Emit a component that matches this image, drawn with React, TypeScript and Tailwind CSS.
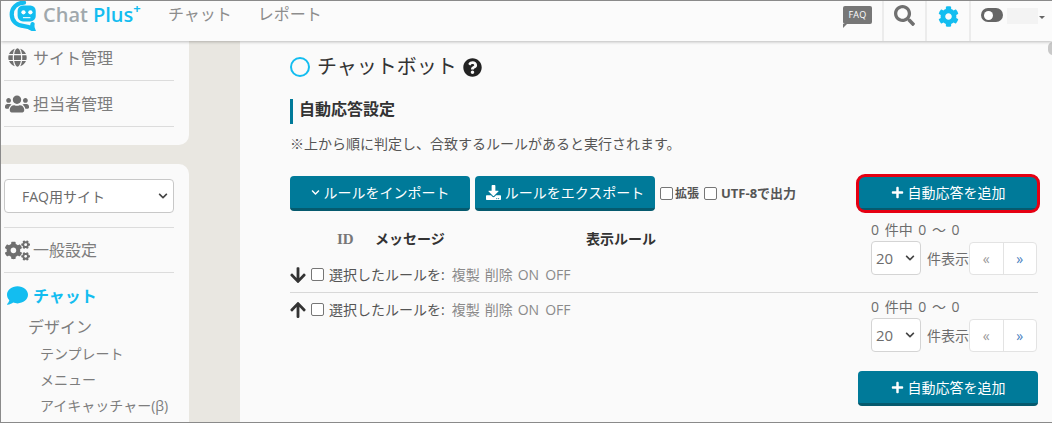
import { FaArrowDown, FaArrowUp, FaChevronDown, FaCog, FaCogs, FaComment, FaDownload, FaGlobe, FaPlus, FaQuestionCircle, FaSearch, FaUsers } from "react-icons/fa"

function Logo() {
  return (
    <svg width="34" height="32" viewBox="0 0 30 30">
      <path d="M15 3.500C8.500 3.500 3.500 8 3.500 14.500S8.500 25 15 25.500c3 .3 6 1.500 8.500 3-.8-2-.8-3.500-.5-5" fill="none" stroke="#13bdf0" strokeWidth="4" strokeLinecap="round" />
      <rect x="9" y="6" width="17" height="15" rx="5" fill="#13bdf0" />
      <circle cx="14.500" cy="12.500" r="2" fill="#fff" />
      <circle cx="21" cy="12.500" r="2" fill="#fff" />
      <path d="M14 17.500h7" stroke="#fff" strokeWidth="1" />
    </svg>
  )
}

function Header() {
  return (
    <header className="flex h-[40px] items-stretch bg-[#fbfbfb] shadow-[0_1px_3px_rgba(0,0,0,0.25)] relative z-10">
      <div className="flex items-center pl-[6px] w-[167px] mt-[-12px]">
        <Logo />
        <span className="ml-[2px] text-[20px] font-semibold text-[#a0a8ac]">Chat</span>
        <span className="ml-[5px] text-[20px] font-semibold text-[#13bdf0]">Plus</span>
        <span className="text-[13px] font-bold text-[#13bdf0] mb-[12px]">+</span>
      </div>
      <nav className="flex items-center gap-[26px] text-[16px] text-[#8d8d8d] mt-[-14px]">
        <span>チャット</span>
        <span>レポート</span>
      </nav>
      <div className="ml-auto flex items-stretch">
        <div className="w-[39px] flex justify-start pt-[5px] relative">
          <div className="w-[29px] h-[18px] bg-[#777] rounded-[2px] text-[9px] text-white text-center leading-[18px] tracking-wide">FAQ</div>
          <div className="absolute left-0 top-[23px] w-0 h-0 border-t-[4px] border-t-[#777] border-r-[4px] border-r-transparent" />
        </div>
        <div className="w-[43px] border-l-2 border-[#ececec] flex justify-center pt-[4px] text-[#707070] text-[21px]">
          <FaSearch />
        </div>
        <div className="w-[44px] border-l-2 border-[#ececec] flex justify-center pt-[5px] text-[#13bdf0] text-[21px]">
          <FaCog />
        </div>
        <div className="w-[83px] border-l-2 border-[#ececec] flex items-start pt-[7px] pl-[10px]">
          <div className="w-[22px] h-[14px] rounded-full bg-[#666] flex items-center pl-[3px]">
            <span className="w-[9px] h-[9px] rounded-full bg-white" />
          </div>
          <div className="ml-[4px] w-[31px] h-[16px] bg-[#f3f3f3]" />
          <div className="ml-[1px] mt-[8px] w-0 h-0 border-x-[3.500px] border-x-transparent border-t-[3.500px] border-t-[#666]" />
        </div>
      </div>
    </header>
  )
}

function SideItem({ icon, label, className }: { icon: React.ReactNode; label: string; className: string }) {
  return (
    <div className={`${className} flex items-center border-b border-[#dcdcdc] text-[#7d7d7d] text-[16px]`}>
      <span className="w-[26px] flex justify-center text-[#6f6f6f]">{icon}</span>
      <span className="ml-[3px]">{label}</span>
    </div>
  )
}

function Sidebar() {
  return (
    <aside className="w-[188px] shrink-0 flex flex-col">
      <div className="bg-[#fafafa] h-[104px] rounded-br-[10px] pl-[3px] pr-[15px]">
        <SideItem className="h-[40px] pb-[6px]" icon={<FaGlobe className="text-[19px]" />} label="サイト管理" />
        <SideItem className="h-[46px]" icon={<FaUsers className="text-[24px]" />} label="担当者管理" />
      </div>
      <div className="flex-1 mt-[19px] bg-[#fafafa] rounded-tr-[10px] pl-[3px] pr-[15px] pt-[15px]">
        <div className="pb-[14px] border-b border-[#dcdcdc]">
          <div className="h-[34px] w-[170px] border border-[#c8c8c8] rounded-[4px] bg-white flex items-center pl-[17px] pr-[5px] text-[14px] text-[#6a6a6a]">
            FAQ用サイト
            <FaChevronDown className="ml-auto text-[10px] text-[#444]" />
          </div>
        </div>
        <SideItem className="h-[45px]" icon={<FaCogs className="text-[25px]" />} label="一般設定" />
        <div className="flex items-center h-[45px] text-[16px] font-bold text-[#13bdf0]">
          <span className="w-[26px] flex justify-center text-[21px]"><FaComment /></span>
          <span className="ml-[3px]">チャット</span>
        </div>
        <div className="ml-[24px] -mt-[3px] text-[16px] text-[#7d7d7d] leading-[24px]">デザイン</div>
        <div className="ml-[36px] mt-[2px] flex flex-col text-[14px] text-[#7d7d7d] leading-[26px]">
          <span>テンプレート</span>
          <span>メニュー</span>
          <span>アイキャッチャー(β)</span>
        </div>
      </div>
    </aside>
  )
}

function TealButton({ icon, label }: { icon: React.ReactNode; label: string }) {
  return (
    <button className="w-[180px] h-[35px] rounded-[4px] bg-[#007a99] border-b-[3px] border-[#055a6e] text-white text-[14px] flex items-center justify-center gap-[4px]">
      {icon}
      {label}
    </button>
  )
}

function Pager({ className }: { className?: string }) {
  return (
    <div className={`${className ?? ""} w-[167px] text-[#6d6d6d] text-[14px]`}>
      <div className="leading-[18px] [word-spacing:2px]">0 件中 0 〜 0</div>
      <div className="flex items-center mt-[2px]">
        <div className="w-[50px] h-[34px] bg-white border border-[#d4d4d4] rounded-[4px] flex items-center pl-[4px] pr-[5px] text-[15px]">
          20
          <FaChevronDown className="ml-auto text-[10px] text-[#444]" />
        </div>
        <span className="ml-[6px] w-[42px] whitespace-nowrap">件表示</span>
        <div className="w-[68px] h-[33px] flex bg-white border border-[#e3e3e3] rounded-[4px] text-[14px]">
          <span className="flex-1 flex items-center justify-center border-r border-[#e3e3e3] text-[#999]">«</span>
          <span className="flex-1 flex items-center justify-center text-[#4a7fc0]">»</span>
        </div>
      </div>
    </div>
  )
}

function BulkRow({ up }: { up?: boolean }) {
  return (
    <div className="flex items-center text-[14px] text-[#555]">
      <span className="w-[20px] text-[#333] text-[18px] -ml-[1px] mr-[1px]">{up ? <FaArrowUp /> : <FaArrowDown />}</span>
      <span className="w-[13px] h-[13px] ml-[1px] bg-white border border-[#767676] rounded-[2px]" />
      <span className="ml-[5px]">選択したルールを:</span>
      <span className="ml-[7px] text-[#8a8a8a] flex gap-[5px]">
        <span>複製</span><span>削除</span><span>ON</span><span className="ml-[1px]">OFF</span>
      </span>
    </div>
  )
}

function Main() {
  return (
    <main className="flex-1 bg-[#fafafa] pl-[50px] pr-[14px] pt-[13px] relative">
      <div className="absolute right-[-1px] top-[1px] w-[5px] h-[13px] rounded-l-full bg-[#c9c9c9]" />
      <div className="flex items-center h-[26px] text-[#333]">
        <span className="w-[20px] h-[20px] rounded-full border-2 border-[#13bdf0]" />
        <span className="ml-[7px] text-[20px]">チャットボット</span>
        <FaQuestionCircle className="ml-[6px] text-[19px] text-[#222]" />
      </div>
      <h2 className="mt-[19px] h-[25px] border-l-[3px] border-[#007a99] pl-[6px] text-[16px] font-bold text-[#333] leading-[20px]">自動応答設定</h2>
      <p className="mt-[10px] text-[14px] leading-[20px] text-[#555]">※上から順に判定し、合致するルールがあると実行されます。</p>
      <div className="mt-[22px] flex items-center">
        <TealButton icon={<FaChevronDown className="text-[9px]" />} label="ルールをインポート" />
        <div className="ml-[5px]">
          <TealButton icon={<FaDownload className="text-[15px]" />} label="ルールをエクスポート" />
        </div>
        <span className="ml-[5px] w-[13px] h-[13px] bg-white border border-[#767676] rounded-[2px]" />
        <span className="ml-[2px] text-[12px] font-bold text-[#555]">拡張</span>
        <span className="ml-[5px] w-[13px] h-[13px] bg-white border border-[#767676] rounded-[2px]" />
        <span className="ml-[4px] text-[13px] font-bold text-[#555]">UTF-8で出力</span>
        <div className="ml-auto rounded-[7px] outline-[3px] outline-[#e60012] outline-offset-[-1px]">
          <TealButton icon={<FaPlus className="text-[13px]" />} label="自動応答を追加" />
        </div>
      </div>
      <div className="mt-[10px] flex items-start justify-between border-b border-[#d8d8d8] h-[72px]">
        <div className="flex flex-col h-full">
          <div className="flex mt-[8px] text-[14px] font-bold text-[#333] leading-[20px]">
            <span className="ml-[47px] w-[38px] text-[15px] font-['Liberation_Serif',serif] text-[#777]">ID</span>
            <span className="w-[211px]">メッセージ</span>
            <span>表示ルール</span>
          </div>
          <div className="mt-[15px]"><BulkRow /></div>
        </div>
        <Pager />
      </div>
      <div className="flex items-start justify-between h-[76px]">
        <div className="mt-[6px]"><BulkRow up /></div>
        <Pager className="mt-[5px]" />
      </div>
      <div className="flex justify-end mt-[2px]">
        <TealButton icon={<FaPlus className="text-[13px]" />} label="自動応答を追加" />
      </div>
    </main>
  )
}

export default function App() {
  return (
    <div className="w-[1052px] h-[423px] overflow-hidden border border-[#8a8a8a] border-r-0 flex flex-col bg-[#e9e7e1] font-['Open_Sans','Noto_Sans_CJK_JP',sans-serif]">
      <Header />
      <div className="flex flex-1 min-h-0">
        <Sidebar />
        <div className="w-[51px] shrink-0" />
        <Main />
      </div>
    </div>
  )
}
